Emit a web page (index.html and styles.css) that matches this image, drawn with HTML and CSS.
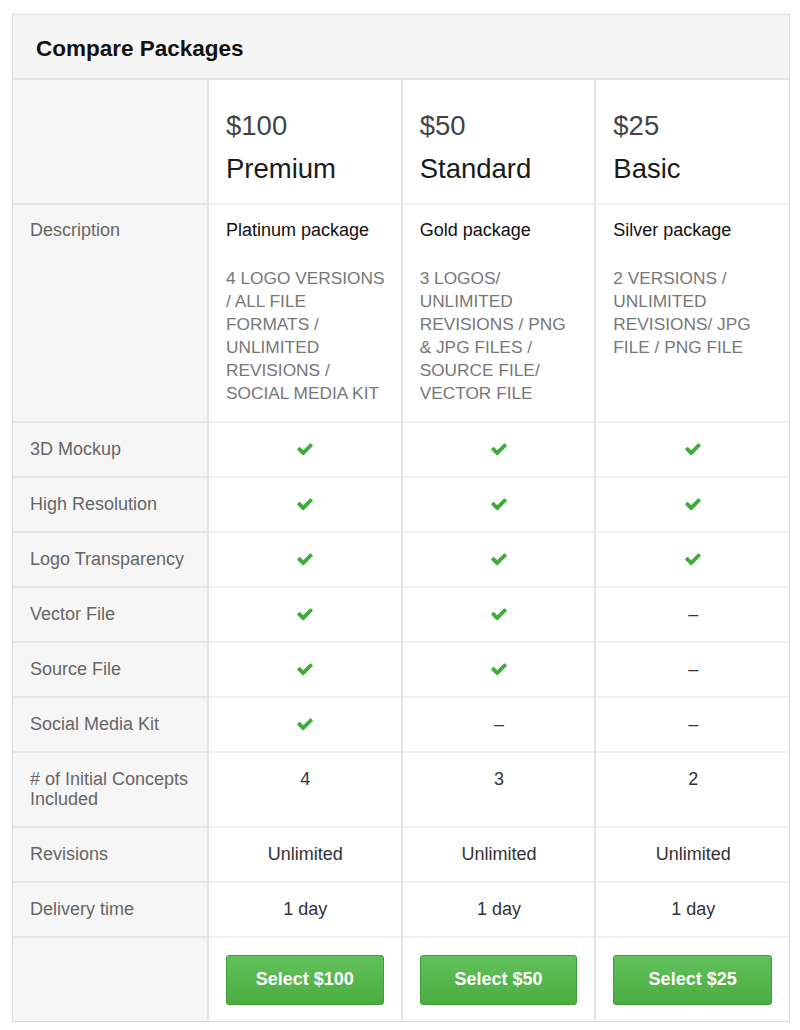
FILE: index.html
```html
<!DOCTYPE html>
<html>
<head>
<meta charset="utf-8">
<title>Compare Packages</title>
<link rel="stylesheet" href="styles.css">
</head>
<body>
<div class="panel">
  <div class="panel-head"><h2 class="title">Compare Packages</h2></div>
  <table class="compare">
    <colgroup><col class="c-label"><col class="c-pkg"><col class="c-pkg"><col class="c-pkg"></colgroup>
    <tr class="head-row">
      <td class="label"></td>
      <td class="pkg"><div class="price">$100</div><div class="name">Premium</div></td>
      <td class="pkg"><div class="price">$50</div><div class="name">Standard</div></td>
      <td class="pkg"><div class="price">$25</div><div class="name">Basic</div></td>
    </tr>
    <tr class="desc-row">
      <td class="label">Description</td>
      <td class="pkg"><div class="desc-title">Platinum package</div><div class="desc">4 LOGO VERSIONS / ALL FILE FORMATS / UNLIMITED REVISIONS / SOCIAL MEDIA KIT</div></td>
      <td class="pkg"><div class="desc-title">Gold package</div><div class="desc">3 LOGOS/ UNLIMITED REVISIONS / PNG &amp; JPG FILES / SOURCE FILE/ VECTOR FILE</div></td>
      <td class="pkg"><div class="desc-title">Silver package</div><div class="desc">2 VERSIONS / UNLIMITED REVISIONS/ JPG FILE / PNG FILE</div></td>
    </tr>
    <tr>
      <td class="label">3D Mockup</td>
      <td class="val"><svg class="check" viewBox="0 0 1792 1792"><path d="M1671 566q0 40-28 68l-724 724-136 136q-28 28-68 28t-68-28l-136-136-362-362q-28-28-28-68t28-68l136-136q28-28 68-28t68 28l294 295 656-657q28-28 68-28t68 28l136 136q28 28 28 68z"/></svg></td>
      <td class="val"><svg class="check" viewBox="0 0 1792 1792"><path d="M1671 566q0 40-28 68l-724 724-136 136q-28 28-68 28t-68-28l-136-136-362-362q-28-28-28-68t28-68l136-136q28-28 68-28t68 28l294 295 656-657q28-28 68-28t68 28l136 136q28 28 28 68z"/></svg></td>
      <td class="val"><svg class="check" viewBox="0 0 1792 1792"><path d="M1671 566q0 40-28 68l-724 724-136 136q-28 28-68 28t-68-28l-136-136-362-362q-28-28-28-68t28-68l136-136q28-28 68-28t68 28l294 295 656-657q28-28 68-28t68 28l136 136q28 28 28 68z"/></svg></td>
    </tr>
    <tr>
      <td class="label">High Resolution</td>
      <td class="val"><svg class="check" viewBox="0 0 1792 1792"><path d="M1671 566q0 40-28 68l-724 724-136 136q-28 28-68 28t-68-28l-136-136-362-362q-28-28-28-68t28-68l136-136q28-28 68-28t68 28l294 295 656-657q28-28 68-28t68 28l136 136q28 28 28 68z"/></svg></td>
      <td class="val"><svg class="check" viewBox="0 0 1792 1792"><path d="M1671 566q0 40-28 68l-724 724-136 136q-28 28-68 28t-68-28l-136-136-362-362q-28-28-28-68t28-68l136-136q28-28 68-28t68 28l294 295 656-657q28-28 68-28t68 28l136 136q28 28 28 68z"/></svg></td>
      <td class="val"><svg class="check" viewBox="0 0 1792 1792"><path d="M1671 566q0 40-28 68l-724 724-136 136q-28 28-68 28t-68-28l-136-136-362-362q-28-28-28-68t28-68l136-136q28-28 68-28t68 28l294 295 656-657q28-28 68-28t68 28l136 136q28 28 28 68z"/></svg></td>
    </tr>
    <tr>
      <td class="label">Logo Transparency</td>
      <td class="val"><svg class="check" viewBox="0 0 1792 1792"><path d="M1671 566q0 40-28 68l-724 724-136 136q-28 28-68 28t-68-28l-136-136-362-362q-28-28-28-68t28-68l136-136q28-28 68-28t68 28l294 295 656-657q28-28 68-28t68 28l136 136q28 28 28 68z"/></svg></td>
      <td class="val"><svg class="check" viewBox="0 0 1792 1792"><path d="M1671 566q0 40-28 68l-724 724-136 136q-28 28-68 28t-68-28l-136-136-362-362q-28-28-28-68t28-68l136-136q28-28 68-28t68 28l294 295 656-657q28-28 68-28t68 28l136 136q28 28 28 68z"/></svg></td>
      <td class="val"><svg class="check" viewBox="0 0 1792 1792"><path d="M1671 566q0 40-28 68l-724 724-136 136q-28 28-68 28t-68-28l-136-136-362-362q-28-28-28-68t28-68l136-136q28-28 68-28t68 28l294 295 656-657q28-28 68-28t68 28l136 136q28 28 28 68z"/></svg></td>
    </tr>
    <tr>
      <td class="label">Vector File</td>
      <td class="val"><svg class="check" viewBox="0 0 1792 1792"><path d="M1671 566q0 40-28 68l-724 724-136 136q-28 28-68 28t-68-28l-136-136-362-362q-28-28-28-68t28-68l136-136q28-28 68-28t68 28l294 295 656-657q28-28 68-28t68 28l136 136q28 28 28 68z"/></svg></td>
      <td class="val"><svg class="check" viewBox="0 0 1792 1792"><path d="M1671 566q0 40-28 68l-724 724-136 136q-28 28-68 28t-68-28l-136-136-362-362q-28-28-28-68t28-68l136-136q28-28 68-28t68 28l294 295 656-657q28-28 68-28t68 28l136 136q28 28 28 68z"/></svg></td>
      <td class="val">–</td>
    </tr>
    <tr>
      <td class="label">Source File</td>
      <td class="val"><svg class="check" viewBox="0 0 1792 1792"><path d="M1671 566q0 40-28 68l-724 724-136 136q-28 28-68 28t-68-28l-136-136-362-362q-28-28-28-68t28-68l136-136q28-28 68-28t68 28l294 295 656-657q28-28 68-28t68 28l136 136q28 28 28 68z"/></svg></td>
      <td class="val"><svg class="check" viewBox="0 0 1792 1792"><path d="M1671 566q0 40-28 68l-724 724-136 136q-28 28-68 28t-68-28l-136-136-362-362q-28-28-28-68t28-68l136-136q28-28 68-28t68 28l294 295 656-657q28-28 68-28t68 28l136 136q28 28 28 68z"/></svg></td>
      <td class="val">–</td>
    </tr>
    <tr>
      <td class="label">Social Media Kit</td>
      <td class="val"><svg class="check" viewBox="0 0 1792 1792"><path d="M1671 566q0 40-28 68l-724 724-136 136q-28 28-68 28t-68-28l-136-136-362-362q-28-28-28-68t28-68l136-136q28-28 68-28t68 28l294 295 656-657q28-28 68-28t68 28l136 136q28 28 28 68z"/></svg></td>
      <td class="val">–</td>
      <td class="val">–</td>
    </tr>
    <tr>
      <td class="label"># of Initial Concepts Included</td>
      <td class="val">4</td>
      <td class="val">3</td>
      <td class="val">2</td>
    </tr>
    <tr>
      <td class="label">Revisions</td>
      <td class="val">Unlimited</td>
      <td class="val">Unlimited</td>
      <td class="val">Unlimited</td>
    </tr>
    <tr>
      <td class="label">Delivery time</td>
      <td class="val">1 day</td>
      <td class="val">1 day</td>
      <td class="val">1 day</td>
    </tr>
    <tr class="btn-row">
      <td class="label"></td>
      <td class="pkg"><button class="select">Select $100</button></td>
      <td class="pkg"><button class="select">Select $50</button></td>
      <td class="pkg"><button class="select">Select $25</button></td>
    </tr>
  </table>
</div>
</body>
</html>
```
FILE: styles.css
```css
html, body {
  margin: 0;
  padding: 0;
  background: #ffffff;
}

body {
  font-family: "Liberation Sans", Arial, Helvetica, sans-serif;
  font-size: 18px;
  color: #333;
}

.panel {
  margin: 14px 0 0 12px;
  width: 776px;
  border: 1px solid #dcdcdc;
  background: #fff;
}

.panel-head {
  box-sizing: border-box;
  height: 65px;
  background: #f5f5f5;
  border-bottom: 2px solid #e4e4e4;
  display: flex;
  align-items: center;
  padding: 4px 0 0 23px;
}

.title {
  margin: 0;
  font-size: 22.5px;
  font-weight: bold;
  color: #111;
}

.compare {
  width: 100%;
  border-collapse: collapse;
  table-layout: fixed;
}

.c-label { width: 195px; }
.c-pkg { width: auto; }

.compare td {
  border-top: 2px solid #f1f1f1;
  border-left: 2px solid #e4e4e4;
  padding: 16.5px 12px 16.5px 17px;
  line-height: 20px;
  vertical-align: top;
}

.compare tr:first-child td {
  border-top: none;
}

.compare td.label {
  border-left: none;
  border-top-color: #e6e6e6;
  background: #f6f6f6;
  color: #666;
  padding-right: 10px;
}

.head-row td.pkg {
  padding: 25px 12px 13px 17px;
}

.price {
  font-size: 27.5px;
  line-height: 42px;
  color: #444;
}

.name {
  margin-top: 1px;
  font-size: 27.5px;
  line-height: 42px;
  color: #1a1a1a;
}

.desc-row td {
  padding-top: 14.5px;
  padding-bottom: 16px;
}

.desc-title {
  color: #111;
  line-height: 20px;
}

.desc {
  margin-top: 27px;
  font-size: 17.3px;
  line-height: 23px;
  color: #777;
}

.compare .desc-row td.pkg {
  padding-right: 14px;
}

.val {
  text-align: center;
  color: #333;
}

.compare td.val {
  padding-left: 15px;
  padding-right: 14px;
}

.check {
  width: 18px;
  height: 18px;
  fill: #3fab38;
  vertical-align: -3px;
}

.btn-row td.pkg {
  padding: 17px 17px 16px 17px;
}

.select {
  display: block;
  width: 100%;
  height: 50px;
  border: 1px solid #3d9e36;
  border-radius: 3px;
  background: linear-gradient(#62c05c, #49ad40);
  color: #fff;
  font-family: "Liberation Sans", Arial, Helvetica, sans-serif;
  font-size: 18px;
  font-weight: bold;
  cursor: pointer;
}
```
